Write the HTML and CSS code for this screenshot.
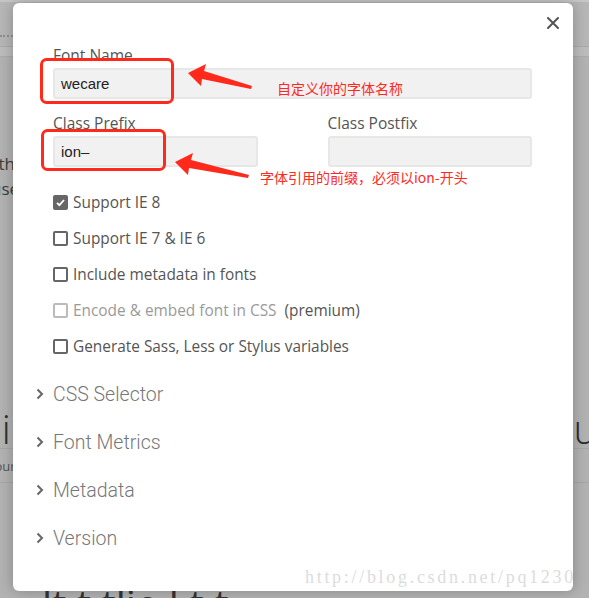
FILE: index.html
```html
<!DOCTYPE html>
<html lang="en">
<head>
  <meta charset="UTF-8" />
  <meta name="viewport" content="width=device-width, initial-scale=1" />
  <title>Font Settings</title>
  <link rel="stylesheet" href="styles.css">
</head>
<body>

  <!-- page behind the dialog (dimmed) -->
  <div class="page" aria-hidden="true">
    <div class="topbar"><div class="dots"></div></div>
    <div class="subbar"></div>
    <div class="bg-text">
      <p class="bg-line">with</p>
      <p class="bg-line">use</p>
    </div>
    <div class="bg-title">
      <span class="bg-left">Ui</span>
      <span class="bg-right">you</span>
    </div>
    <div class="bg-strip"><span class="bg-small">your</span></div>
    <div class="bg-bottom">lt.t tlie <span class="bg-dot"></span> l.t.t</div>
  </div>

  <!-- PREFERENCES DIALOG -->
  <section class="modal" aria-label="Font preferences">
    <button class="close" aria-label="Close">
      <svg width="12" height="12" viewBox="0 0 12 12"><path d="M1 1L11 11M11 1L1 11" stroke="#555" stroke-width="2" stroke-linecap="round"/></svg>
    </button>

    <div class="field">
      <label class="label">Font Name</label>
      <div class="input">wecare</div>
    </div>

    <div class="field-row">
      <div class="field">
        <label class="label">Class Prefix</label>
        <div class="input">ion–</div>
      </div>
      <div class="field">
        <label class="label">Class Postfix</label>
        <div class="input"></div>
      </div>
    </div>

    <ul class="options">
      <li class="option">
        <span class="box checked">
          <svg width="11" height="11" viewBox="0 0 11 11"><path d="M2 5.8L4.4 8.2L9 3" fill="none" stroke="#fff" stroke-width="1.8"/></svg>
        </span>
        Support IE 8
      </li>
      <li class="option"><span class="box"></span>Support IE 7 &amp; IE 6</li>
      <li class="option"><span class="box"></span>Include metadata in fonts</li>
      <li class="option disabled"><span class="box"></span>Encode &amp; embed font in CSS <span class="premium">(premium)</span></li>
      <li class="option"><span class="box"></span>Generate Sass, Less or Stylus variables</li>
    </ul>

    <div class="sections">
      <div class="section"><svg class="chevron" width="8" height="12" viewBox="0 0 8 12"><path d="M1.5 1.5L6 6L1.5 10.5" fill="none" stroke="#666" stroke-width="2"/></svg>CSS Selector</div>
      <div class="section"><svg class="chevron" width="8" height="12" viewBox="0 0 8 12"><path d="M1.5 1.5L6 6L1.5 10.5" fill="none" stroke="#666" stroke-width="2"/></svg>Font Metrics</div>
      <div class="section"><svg class="chevron" width="8" height="12" viewBox="0 0 8 12"><path d="M1.5 1.5L6 6L1.5 10.5" fill="none" stroke="#666" stroke-width="2"/></svg>Metadata</div>
      <div class="section"><svg class="chevron" width="8" height="12" viewBox="0 0 8 12"><path d="M1.5 1.5L6 6L1.5 10.5" fill="none" stroke="#666" stroke-width="2"/></svg>Version</div>
    </div>

    <!-- red annotations drawn over the screenshot -->
    <svg class="marks" width="560" height="588" viewBox="13 3 560 588" aria-hidden="true">
      <rect x="41.5" y="59.5" width="131" height="43" rx="5" fill="none" stroke="#ff2a1c" stroke-width="3"/>
      <rect x="42.5" y="130.5" width="122" height="39" rx="5" fill="none" stroke="#ff2a1c" stroke-width="3"/>
      <polygon points="188,73 206,64 204,71 252,86 251,89 202,79 201,86" fill="#ff2a1c"/>
      <polygon points="175,162 193,153 191,160 249,175 248,178 189,168 188,175" fill="#ff2a1c"/>
    </svg>
    <div class="note note-name">自定义你的字体名称</div>
    <div class="note note-prefix">字体引用的前缀，必须以ion-开头</div>

    <div class="watermark">http://blog.csdn.net/pq1230</div>
  </section>

</body>
</html>
```

FILE: styles.css
```css
* {
  box-sizing: border-box;
}
html, body {
  margin: 0;
  height: 100%;
  overflow: hidden;
}
body {
  background: #b2b2b2;
  font-family: 'Open Sans', 'Noto Sans', sans-serif;
  position: relative;
}

/* dimmed page behind */
.page {
  height: 598px;
  color: #333;
  overflow: hidden;
}
.topbar {
  height: 47px;
  background: #b6b6b6;
  border-top: 2px solid #c6c6c6;
  border-bottom: 1px solid #a9a9a9;
  padding-top: 33px;
}
.dots {
  border-top: 2px dotted #8e8e8e;
  width: 40px;
}
.subbar {
  height: 10px;
  background: #bcbcbc;
  border-bottom: 1px solid #ababab;
}
.bg-text {
  padding-top: 94px;
}
.bg-line {
  margin: 0;
  font-size: 17px;
  line-height: 25px;
  text-indent: -19px;
  color: #3c3c3c;
}
.bg-line + .bg-line {
  text-indent: -9px;
}
.bg-title {
  display: flex;
  justify-content: space-between;
  margin-top: 208px;
  height: 40px;
  font-size: 40px;
  line-height: 40px;
  font-weight: 300;
  color: #2e2e2e;
  border-bottom: 1px solid #a6a6a6;
}
.bg-left {
  margin-left: -27px;
}
.bg-right {
  margin-right: -8px;
}
.bg-strip {
  height: 34px;
  border-bottom: 1px solid #a6a6a6;
  font-size: 13px;
  line-height: 34px;
  color: #555;
}
.bg-small {
  margin-left: -12px;
}
.bg-bottom {
  margin-top: 101px;
  padding-left: 42px;
  font-size: 40px;
  line-height: 40px;
  color: #333;
}

/* dialog */
.modal {
  position: absolute;
  left: 13px;
  top: 3px;
  width: 560px;
  height: 588px;
  background: #fff;
  border-radius: 6px;
  box-shadow: 0 0 14px rgba(0,0,0,0.25);
  padding: 42px 41px 0 40px;
  overflow: hidden;
}

.close {
  position: absolute;
  top: 10px;
  right: 10px;
  width: 20px;
  height: 20px;
  padding: 4px;
  border: none;
  background: transparent;
  cursor: pointer;
}

.label {
  display: block;
  font-size: 15.5px;
  line-height: 20px;
  color: #555;
  margin-bottom: 3px;
}

.input {
  height: 31px;
  background: #f1f1f1;
  border: 2px solid #e7e7e7;
  border-radius: 3px;
  padding: 0 6px;
  font-family: 'Liberation Sans', Arial, sans-serif;
  font-size: 15px;
  line-height: 27px;
  color: #222;
}

.field-row {
  display: grid;
  grid-template-columns: 1fr 1fr;
  column-gap: 70px;
  margin-top: 14px;
}

.options {
  list-style: none;
  margin: 17px 0 0;
  padding: 0;
}
.option {
  display: flex;
  align-items: center;
  height: 36px;
  font-size: 15.4px;
  color: #555;
}
.box {
  width: 15px;
  height: 15px;
  border: 2px solid #666;
  border-radius: 2px;
  margin-right: 5px;
  display: flex;
  align-items: center;
  justify-content: center;
}
.box.checked {
  background: #666;
}
.option.disabled {
  color: #9a9a9a;
}
.option.disabled .box {
  border-color: #bbb;
}
.premium {
  color: #555;
  margin-left: 8px;
}

.sections {
  margin-top: 6px;
}
.section {
  position: relative;
  height: 48px;
  display: flex;
  align-items: center;
  font-family: 'Roboto', sans-serif;
  font-weight: 300;
  font-size: 19.5px;
  color: #777;
}
.chevron {
  position: absolute;
  left: -17px;
  top: 18px;
}

/* annotations */
.marks {
  position: absolute;
  left: 0;
  top: 0;
  pointer-events: none;
}
.note {
  position: absolute;
  font-family: 'Noto Sans CJK SC', sans-serif;
  font-size: 14px;
  line-height: 16px;
  color: #ff2a1c;
}
.note-name {
  left: 264px;
  top: 77px;
}
.note-prefix {
  left: 247px;
  top: 166px;
}

.watermark {
  position: absolute;
  left: 292px;
  top: 564px;
  font-family: 'Liberation Serif', serif;
  font-size: 18px;
  letter-spacing: 2.7px;
  color: #dcdcdc;
  white-space: nowrap;
}
```
